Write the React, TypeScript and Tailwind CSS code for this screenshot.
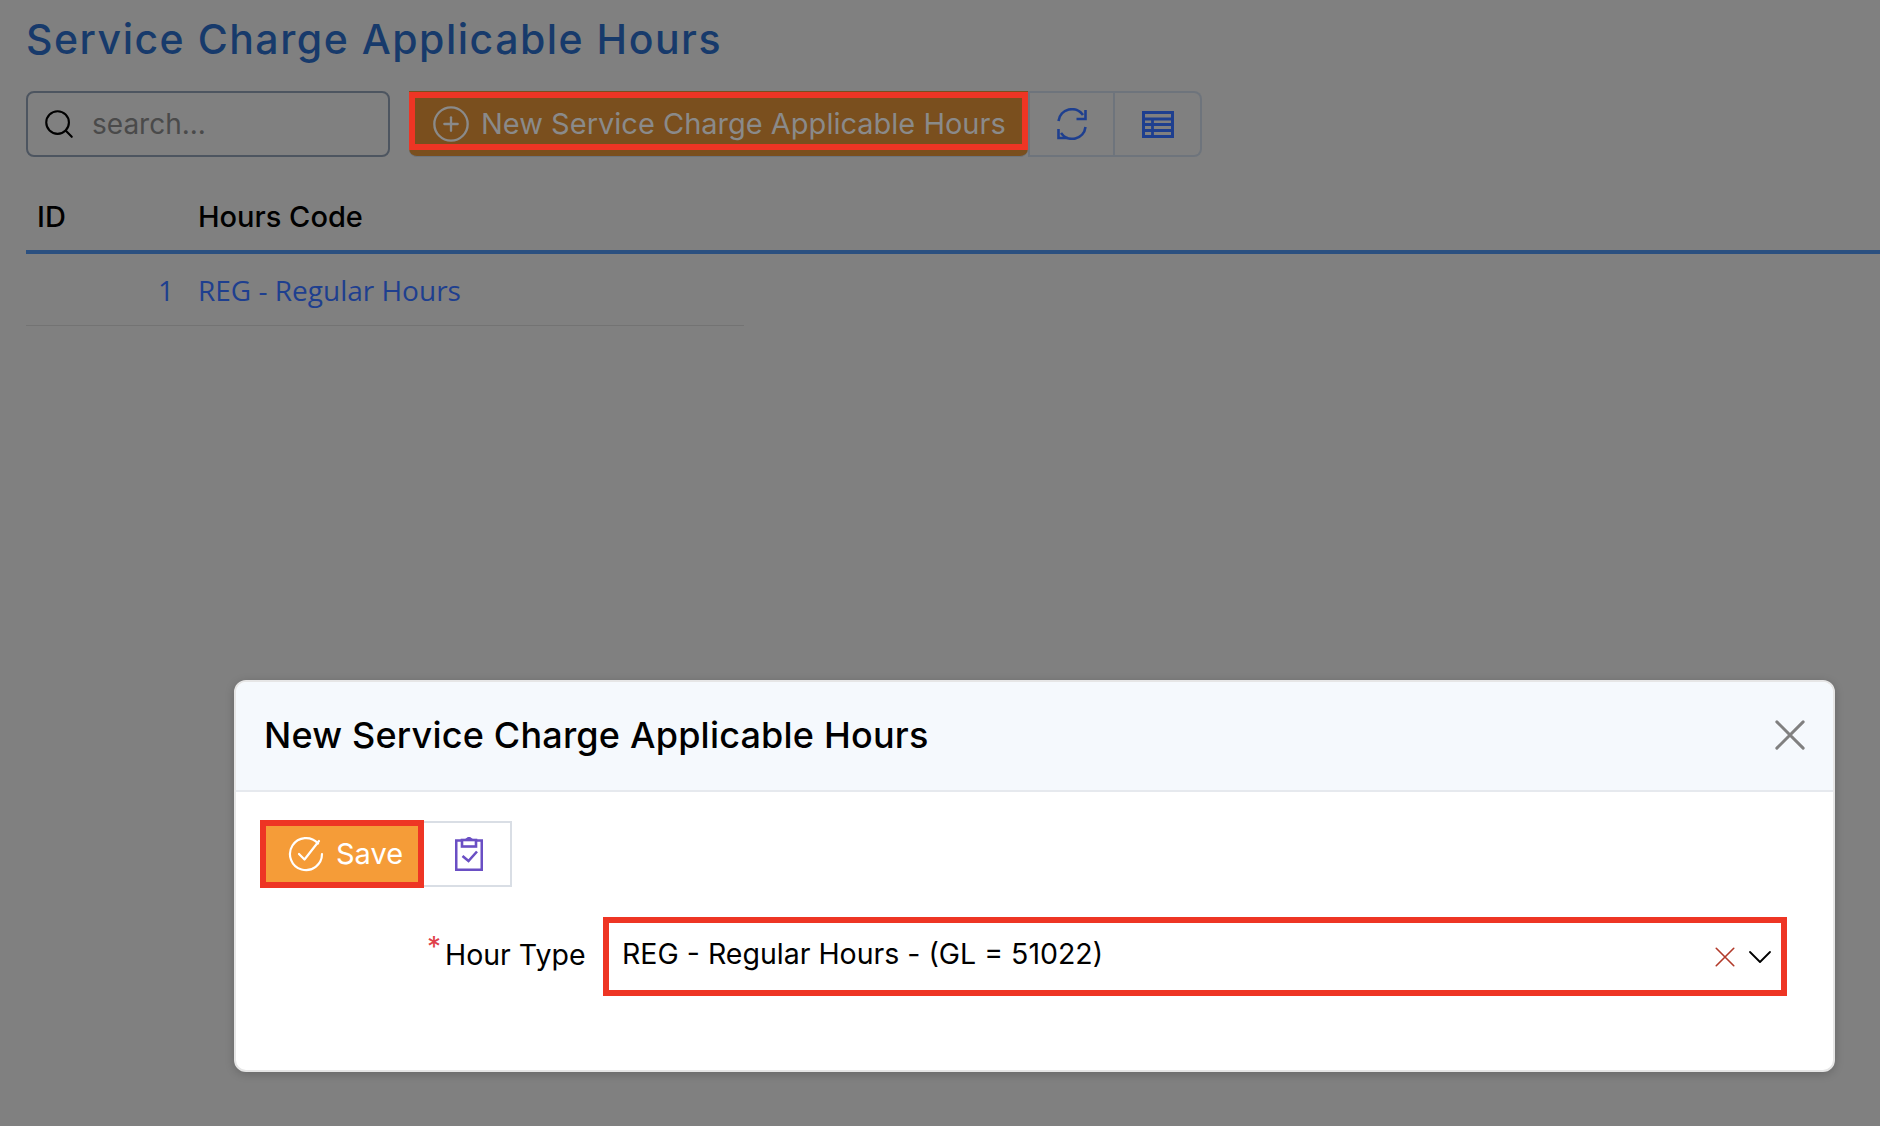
import { Search, CirclePlus, ChevronDown } from "lucide-react";

const poppins = "font-['Inter','Liberation_Sans',sans-serif]";

function RefreshIcon() {
  return (
    <svg width="30" height="32" viewBox="0 0 30 32" fill="none" stroke="#1e3f8f" strokeWidth="2.6">
      <path d="M1.5 13 A13.5 13.5 0 0 1 26 7" />
      <path d="M28.5 19 A13.5 13.5 0 0 1 4 25" />
      <path d="M28.5 2 V11 H19.5" />
      <path d="M1.5 21 V30 H10.5" />
    </svg>
  );
}

function TableIcon() {
  return (
    <svg width="32" height="27" viewBox="0 0 32 27" fill="none" stroke="#1e3f8f" strokeWidth="2.8">
      <rect x="1.5" y="1.5" width="29" height="24" strokeWidth="3" />
      <path d="M1.5 8 H30.5 M1.5 13.5 H30.5 M1.5 19.5 H30.5 M10.5 8 V25.5" />
    </svg>
  );
}

function SaveIcon() {
  return (
    <svg width="36" height="36" viewBox="0 0 36 36" fill="none" stroke="#ffffff" strokeWidth="2.2" strokeLinecap="round" strokeLinejoin="round">
      <path d="M30 7.5 A16 16 0 1 0 34 18" />
      <path d="M11 18 L16.5 23.5 L31 5" />
    </svg>
  );
}

function ClipboardIcon() {
  return (
    <svg width="28" height="34" viewBox="0 0 28 34" fill="none" stroke="#6a4fc4" strokeWidth="2.6">
      <path d="M7 3.5 H1.2 V32.8 H26.8 V3.5 H21" />
      <rect x="7" y="3" width="14" height="6.5" />
      <path d="M11 3 L14 0.8 L17 3" />
      <path d="M7.5 19 L13.5 24 L22 14.5" />
    </svg>
  );
}

function Cross({ size, color, width }: { size: number; color: string; width: number }) {
  return (
    <svg width={size} height={size} viewBox="0 0 32 32" fill="none" stroke={color} strokeWidth={width} strokeLinecap="round">
      <path d="M2 2 L30 30 M30 2 L2 30" />
    </svg>
  );
}

export default function App() {
  return (
    <div className={`relative h-[1126px] w-full overflow-hidden bg-[#808080] ${poppins}`}>
      <div className="pl-[26px] pt-[15px]">
        <h1 className="text-[41px] font-medium leading-[48px] tracking-[1.5px] text-[#173a6b]">
          Service Charge Applicable Hours
        </h1>

        <div className="mt-[28px] flex h-[66px] items-stretch">
          <div className="flex w-[364px] items-center rounded-lg border-2 border-[#4d5560] pl-[14px]">
            <Search size={34} strokeWidth={1.5} className="text-black" />
            <span className="-mt-[1px] ml-[16px] text-[28px] text-[#4a4a4a]">search...</span>
          </div>

          <div className="relative ml-[19px] flex w-[619px] items-center rounded-b-lg border-b border-[#6e747c] bg-[#7a4f1e] pl-[22px]">
            <CirclePlus size={40} strokeWidth={1.4} className="text-[#8a8a8a]" />
            <span className="ml-[10px] whitespace-nowrap text-[29px] text-[#8a8a8a]">
              New Service Charge Applicable Hours
            </span>
            <div className="absolute inset-x-0 top-[1px] h-[58px] border-[6px] border-[#ee3524]" />
          </div>

          <div className="flex w-[87px] items-center justify-center border-2 border-[#6e747c]">
            <RefreshIcon />
          </div>
          <div className="flex w-[87px] items-center justify-center rounded-r-lg border-2 border-l-0 border-[#6e747c]">
            <TableIcon />
          </div>
        </div>

        <div className="mt-[35px] flex h-[62px] items-center border-b-[4px] border-[#2b5080] pb-[8px] text-[29px] font-medium text-black">
          <div className="w-[172px] pl-[11px]">ID</div>
          <div>Hours Code</div>
        </div>

        <div className="flex h-[72px] w-[718px] items-center border-b border-[#737373] font-['Open_Sans',sans-serif] text-[28px] text-[#1e3f8f]">
          <div className="w-[146px] pr-0 text-right translate-x-[2px]">1</div>
          <div className="ml-[26px]">REG - Regular Hours</div>
        </div>
      </div>

      <div className="absolute left-[234px] top-[680px] h-[392px] w-[1601px] overflow-hidden rounded-xl border-2 border-[#e6e6e6] bg-white shadow-[0_2px_10px_rgba(0,0,0,0.2)]">
        <div className="flex h-[110px] items-center justify-between border-b-2 border-[#e6e9ee] bg-[#f5f9fd] pb-[2px] pl-[28px] pr-[28px]">
          <h2 className="text-[36px] font-medium tracking-[0.2px] text-black">New Service Charge Applicable Hours</h2>
          <Cross size={30} color="#808080" width={3.2} />
        </div>

        <div className="px-[24px] pt-[28px]">
          <div className="flex h-[68px] items-stretch">
            <div className="flex w-[164px] items-center border-[6px] border-[#ee3524] bg-[#f59c38] pl-[22px]">
              <SaveIcon />
              <span className="ml-[12px] text-[29px] text-white">Save</span>
            </div>
            <div className="my-px flex w-[88px] items-center justify-center border-2 border-l-0 border-[#d9dee5] pl-[3px]">
              <ClipboardIcon />
            </div>
          </div>

          <div className="mt-[29px] flex h-[79px] items-center">
            <div className="relative ml-[185px] -mt-[2px] w-[140px] whitespace-nowrap text-[28.5px] text-black">
              <span className="absolute -left-[18px] -top-[8px] text-[28px] text-[#e0404a]">*</span>
              Hour Type
            </div>
            <div className="ml-[18px] flex h-[79px] w-[1184px] items-center justify-between border-[6px] border-[#ee3524] bg-white pl-[13px] pr-[1px]">
              <span className="-mt-[4px] whitespace-nowrap text-[28.5px] text-black">REG - Regular Hours - (GL = 51022)</span>
              <div className="flex items-center gap-[5px]">
                <Cross size={20} color="#b23a2a" width={2.6} />
                <ChevronDown size={40} strokeWidth={1.1} className="text-black" />
              </div>
            </div>
          </div>
        </div>
      </div>
    </div>
  );
}
